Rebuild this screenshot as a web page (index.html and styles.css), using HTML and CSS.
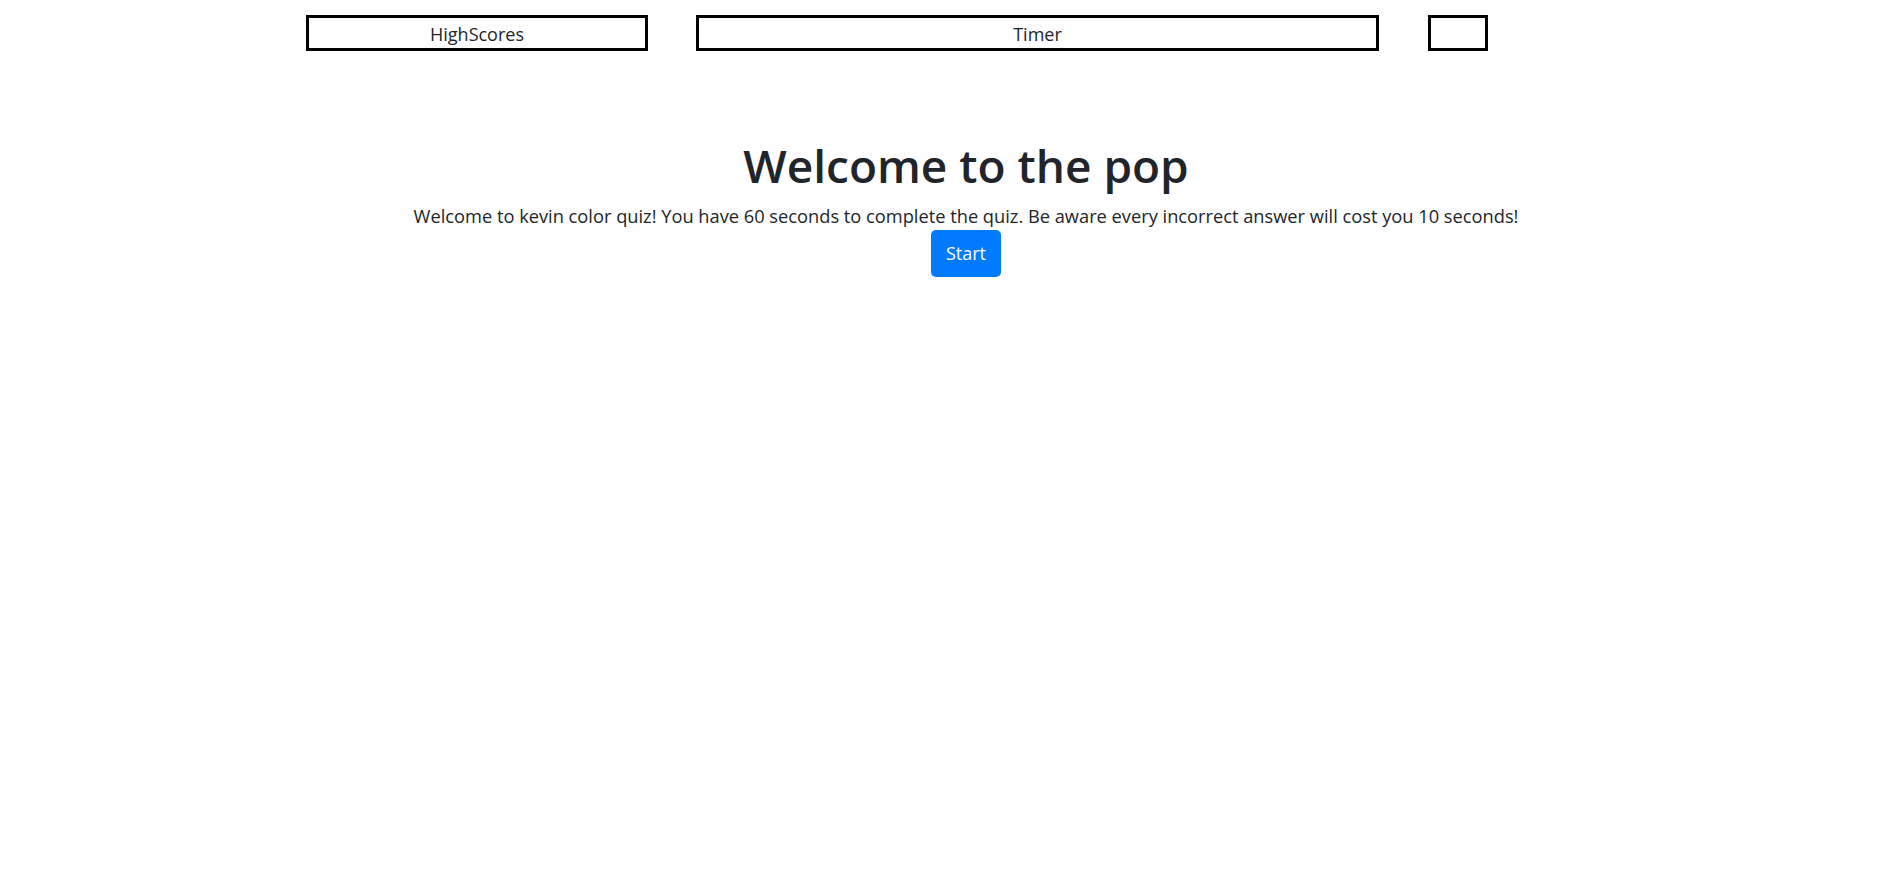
FILE: index.html
```html
<!DOCTYPE html>
<html>
<head>
<meta charset="utf-8">
<link rel="stylesheet" href="styles.css">
</head>
<body>
<header class="topbar">
  <div class="box box-scores">HighScores</div>
  <div class="box box-timer">Timer</div>
  <div class="box box-small"></div>
</header>
<main class="intro">
  <h1 class="title">Welcome to the pop</h1>
  <p class="lead">Welcome to kevin color quiz! You have 60 seconds to complete the quiz. Be aware every incorrect answer will cost you 10 seconds!</p>
  <button class="start">Start</button>
</main>
</body>
</html>
```

FILE: styles.css
```css
html, body {
  margin: 0;
  padding: 0;
  background: #fff;
}
body {
  font-family: "Open Sans", "Noto Sans", "Liberation Sans", sans-serif;
  color: #212529;
  font-size: 18px;
}
.topbar {
  display: flex;
  padding: 15px 0 0 306px;
}
.box {
  box-sizing: border-box;
  height: 36px;
  border: 3px solid #000;
  padding-top: 2px;
  display: flex;
  align-items: center;
  justify-content: center;
  font-size: 18px;
  color: #212529;
}
.box-scores { width: 342px; margin-right: 48px; }
.box-timer { width: 683px; margin-right: 49px; }
.box-small { width: 60px; }

.intro {
  display: flex;
  flex-direction: column;
  align-items: center;
  margin-left: 37px;
  padding-top: 87px;
}
.title {
  margin: 0 0 9px;
  font-size: 46px;
  font-weight: 600;
  line-height: 1.2;
}
.lead {
  margin: 0;
  font-size: 18.25px;
  line-height: 1.5;
}
.start {
  font-family: inherit;
  font-size: 18px;
  color: #fff;
  background: #007bff;
  border: none;
  border-radius: 5px;
  width: 70px;
  height: 47px;
  padding: 0;
  margin-top: 0;
}
```
